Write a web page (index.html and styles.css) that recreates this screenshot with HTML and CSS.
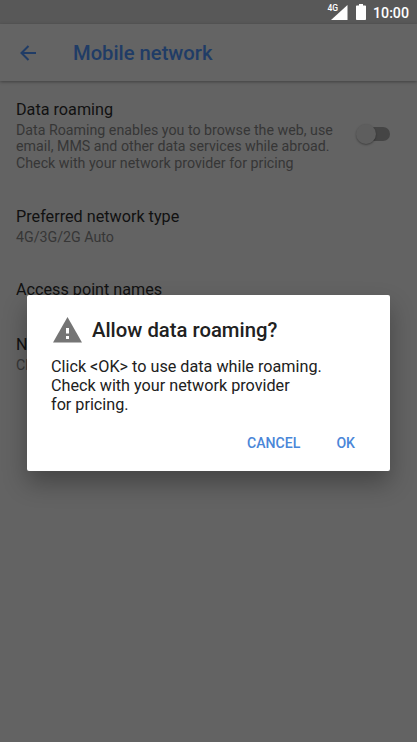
FILE: index.html
```html
<!DOCTYPE html>
<html lang="en">
<head>
    <meta charset="UTF-8">
    <meta name="viewport" content="width=device-width, initial-scale=1.0">
    <title>Mobile network</title>
    <link rel="stylesheet" href="styles.css">
</head>
<body>
    <div class="status-bar">
        <span class="signal-type">4G</span>
        <svg class="signal" width="17" height="15" viewBox="0 0 17 15"><path d="M16.500 0v15H0z" fill="#fff"/></svg>
        <svg class="battery" width="10" height="16" viewBox="0 0 10 16"><path d="M3 0h4v1.500h2.200q.8 0 .8.800v12.900q0 .8-.8.800H.8q-.8 0-.8-.8V2.300q0-.8.800-.8H3z" fill="#fff"/></svg>
        <span class="clock">10:00</span>
    </div>

    <div class="toolbar">
        <svg class="back" width="16" height="16" viewBox="0 0 16 16"><path d="M16 8H1.500M8.500 1L1.500 8l7 7" fill="none" stroke="#203c66" stroke-width="2"/></svg>
        <h1 class="page-title">Mobile network</h1>
    </div>

    <div class="settings">
        <div class="item item-roaming">
            <div>
                <div class="item-title">Data roaming</div>
                <div class="item-text">Data Roaming enables you to browse the web, use<br>email, MMS and other data services while abroad.<br>Check with your network provider for pricing</div>
            </div>
            <div class="switch"><div class="thumb"></div></div>
        </div>
        <div class="item item-type">
            <div class="item-title">Preferred network type</div>
            <div class="item-text">4G/3G/2G Auto</div>
        </div>
        <div class="item item-apn">
            <div class="item-title">Access point names</div>
        </div>
        <div class="item">
            <div class="item-title">N</div>
            <div class="item-text">Ch</div>
        </div>
    </div>

    <div class="dialog">
        <div class="dialog-header">
            <svg class="warning" width="30" height="26" viewBox="0 0 30 26"><path d="M15.500 0L30 25.500H1z" fill="#757575"/><path d="M14 11h3v5.500h-3zM14 19h3v3h-3z" fill="#fff"/></svg>
            <h2 class="dialog-title">Allow data roaming?</h2>
        </div>
        <p class="dialog-text">Click &lt;OK&gt; to use data while roaming.<br>Check with your network provider<br>for pricing.</p>
        <div class="buttons">
            <button class="btn btn-cancel">CANCEL</button>
            <button class="btn btn-ok">OK</button>
        </div>
    </div>
</body>
</html>
```
FILE: styles.css
```css
body{
    margin: 0;
    height: 742px;
    overflow: hidden;
    position: relative;
    background-color: #636363;
    font-family: Roboto, sans-serif;
}
.status-bar{
    height: 24px;
    box-sizing: border-box;
    padding: 4px 8px 0 0;
    display: flex;
    justify-content: flex-end;
    align-items: flex-start;
    background-color: #585858;
    color: #fff;
}
.signal-type{
    font-size: 8.500px;
    line-height: 8px;
    font-weight: 500;
    margin-right: -10px;
}
.signal{
    margin: 1px 8px 0 3px;
}
.battery{
    margin-right: 7px;
}
.clock{
    font-size: 14.200px;
    line-height: 18px;
    font-weight: 500;
}
.toolbar{
    height: 57px;
    display: flex;
    align-items: center;
    padding-left: 20px;
    background-color: #646464;
    box-shadow: 0 1px 3px rgba(0,0,0,0.35);
}
.page-title{
    margin: 0 0 0 37px;
    font-size: 20.200px;
    line-height: 24px;
    font-weight: 500;
    color: #203c66;
}
.settings{
    padding: 19px 16px 0;
}
.item-roaming{
    display: flex;
    justify-content: space-between;
    height: 107px;
}
.item-type{
    height: 73px;
}
.item-apn{
    height: 55px;
}
.item-title{
    font-size: 16.200px;
    line-height: 20px;
    color: #111;
}
.item-text{
    font-size: 14.220px;
    line-height: 16.500px;
    padding-top: 1.500px;
    color: #363636;
    white-space: nowrap;
}
.switch{
    width: 28px;
    height: 14px;
    margin: 27px 11px 0 0;
    border-radius: 7px;
    background-color: #454545;
}
.thumb{
    width: 20px;
    height: 20px;
    margin: -3px 0 0 -6px;
    border-radius: 50%;
    background-color: #5e5e5e;
    box-shadow: 0 1px 2px rgba(0,0,0,0.35);
}
.dialog{
    position: absolute;
    left: 27px;
    top: 295px;
    width: 363px;
    height: 176px;
    box-sizing: border-box;
    padding: 22px 25px 0 24px;
    border-radius: 2px;
    background-color: #fff;
    box-shadow: 0 12px 24px rgba(0,0,0,0.3);
    color: #212121;
}
.dialog-header{
    display: flex;
    align-items: center;
    padding-left: 1px;
}
.dialog-title{
    margin: 0 0 0 10px;
    font-size: 20.300px;
    line-height: 26px;
    font-weight: 500;
}
.dialog-text{
    margin: 13.500px 0 0;
    font-size: 16.200px;
    line-height: 19.200px;
}
.buttons{
    display: flex;
    justify-content: flex-end;
    margin-top: 20px;
    padding-right: 10px;
}
.btn{
    border: none;
    padding: 0;
    background: none;
    font: 500 14.100px/18px Roboto, sans-serif;
    color: #4a86d8;
}
.btn-ok{
    margin-left: 36px;
}
```
